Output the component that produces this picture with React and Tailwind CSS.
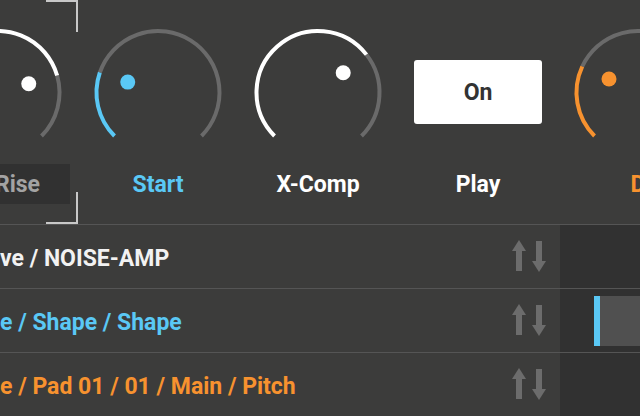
import React from "react";

const TRACK = "#6a6a6a";
const BLUE = "#5ac8f5";
const ORANGE = "#f7922f";

const CX = 80;
const CY = 92.5;
const R = 61.5;

function pt(deg, r) {
  const a = (deg * Math.PI) / 180;
  return [CX + r * Math.sin(a), CY - r * Math.cos(a)];
}

function arc(from, to) {
  const [x1, y1] = pt(from, R);
  const [x2, y2] = pt(to, R);
  const large = to - from > 180 ? 1 : 0;
  return `M ${x1} ${y1} A ${R} ${R} 0 ${large} 1 ${x2} ${y2}`;
}

function Knob({ angle, color }) {
  const [dx, dy] = pt(angle, 32);
  return (
    <svg width="160" height="164" viewBox="0 0 160 164" className="overflow-visible">
      <path d={arc(angle, 135)} fill="none" stroke={TRACK} strokeWidth="4" />
      <path d={arc(-135, angle)} fill="none" stroke={color} strokeWidth="4" />
      <circle cx={dx} cy={dy} r="7.5" fill={color} />
    </svg>
  );
}

function Arrows() {
  return (
    <svg width="34" height="33" viewBox="0 0 34 33" className="shrink-0">
      <polygon points="0,11 7,0 14,11" fill="#6c6c6c" />
      <rect x="4" y="10" width="6" height="21" fill="#6c6c6c" />
      <rect x="24" y="1" width="6" height="21" fill="#6c6c6c" />
      <polygon points="20,21 27,32 34,21" fill="#6c6c6c" />
    </svg>
  );
}

const columns = [
  { label: "Rise", angle: 74, color: "#ffffff", editing: true },
  { label: "Start", angle: -71, color: BLUE, text: "text-[#5ac8f5]" },
  { label: "X-Comp", angle: 52, color: "#ffffff", text: "text-white" },
  { label: "Play", button: true, text: "text-white" },
  { label: "D", angle: -65, color: ORANGE, text: "text-[#f7922f]" },
];

const rows = [
  { path: "ve / NOISE-AMP", text: "text-[#f2f2f2]" },
  { path: "e / Shape / Shape", text: "text-[#5ac8f5]", active: true },
  { path: "e / Pad 01 / 01 / Main / Pitch", text: "text-[#f7922f]" },
];

export default function App() {
  return (
    <div
      className="relative w-[640px] h-[416px] overflow-hidden bg-[#3c3c3b]"
      style={{ fontFamily: "Roboto, 'Liberation Sans', sans-serif" }}
    >
      {/* Knobs */}
      <div className="relative h-[225px] border-b border-[#555555]">
        <div className="flex -ml-[82px]">
          {columns.map((c) => (
            <div key={c.label} className="flex flex-col w-[160px] shrink-0">
              {c.button ? (
                <div className="h-[164px] flex justify-center pt-[60px]">
                  <button className="w-[128px] h-[64px] pt-[2px] rounded-[3px] bg-white text-[#333333] text-[23px] font-bold">
                    On
                  </button>
                </div>
              ) : (
                <Knob angle={c.angle} color={c.color} />
              )}
              {c.editing ? (
                <div className="h-[40px] ml-[8px] w-[144px] pt-[2px] bg-[#313131] flex items-center justify-end pr-[30px] text-[23px] font-bold text-[#a3a3a3]">
                  {c.label}
                </div>
              ) : (
                <div className={`h-[40px] pt-[2px] flex items-center justify-center text-[23px] font-bold whitespace-nowrap ${c.text}`}>
                  {c.label}
                </div>
              )}
            </div>
          ))}
        </div>

        {/* selection brackets */}
        <div className="absolute left-[46px] top-0 w-[32px] h-[32px] border-t-2 border-r-2 border-[#c8c8c8]" />
        <div className="absolute left-[46px] top-[192px] w-[32px] h-[32px] border-b-2 border-r-2 border-[#c8c8c8]" />
      </div>

      {/* Rows */}
      {rows.map((r) => (
        <div key={r.path} className="flex h-[64px] border-b border-[#555555]">
          <div className="flex-1 flex items-center overflow-hidden pt-[5px]">
            <span className={`whitespace-nowrap text-[23px] font-bold ${r.text}`}>{r.path}</span>
          </div>
          <div className="flex items-center pr-[14px]">
            <Arrows />
          </div>
          <div className="w-[80px] bg-[#313131] flex items-center">
            {r.active && (
              <div className="flex h-[50px] ml-[34px] flex-1">
                <div className="w-[6px] bg-[#5ac8f5]" />
                <div className="flex-1 bg-[#505050]" />
              </div>
            )}
          </div>
        </div>
      ))}
    </div>
  );
}
